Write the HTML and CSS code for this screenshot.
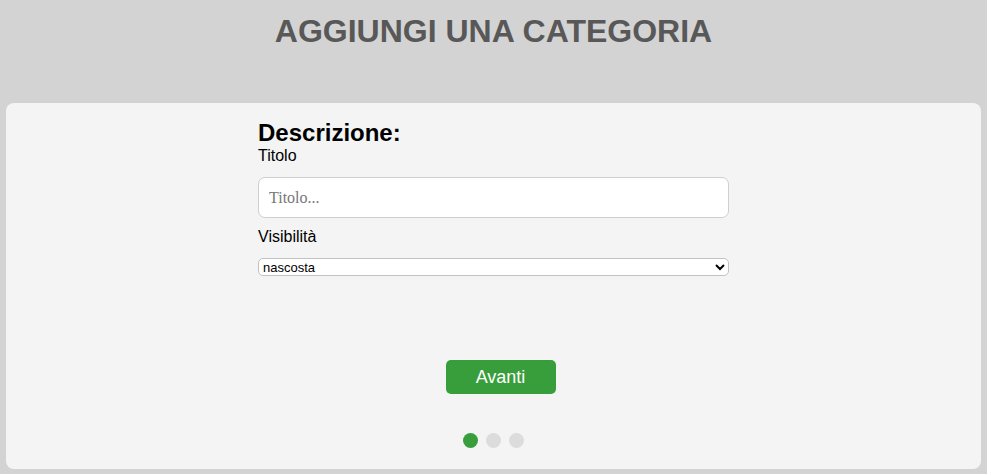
FILE: index.html
```html
<!DOCTYPE html>
<html lang="it">
<head>
<meta charset="utf-8">
<title>Aggiungi una categoria</title>
<link rel="stylesheet" href="styles.css">
</head>
<body>
<header class="page-header">
  <h1 class="page-title">AGGIUNGI UNA CATEGORIA</h1>
</header>
<main class="card">
  <form class="form">
    <h2 class="section-title">Descrizione:</h2>
    <label class="label" for="titolo">Titolo</label>
    <input class="text-input" id="titolo" type="text" placeholder="Titolo...">
    <label class="label label-vis" for="vis">Visibilità</label>
    <select class="select" id="vis">
      <option>nascosta</option>
      <option>visibile</option>
    </select>
    <div class="actions">
      <button class="btn" type="button">Avanti</button>
    </div>
    <div class="dots">
      <span class="dot dot-active"></span>
      <span class="dot"></span>
      <span class="dot"></span>
    </div>
  </form>
</main>
</body>
</html>
```

FILE: styles.css
```css
html, body {
  margin: 0;
  padding: 0;
}
body {
  background: #d3d3d3;
  font-family: "Liberation Sans", Arial, sans-serif;
  color: #000;
  height: 474px;
  overflow: hidden;
}
.page-header {
  height: 103px;
  box-sizing: border-box;
  padding-top: 13px;
}
.page-title {
  margin: 0;
  text-align: center;
  font-size: 32px;
  line-height: 37px;
  font-weight: bold;
  color: #585858;
}
.card {
  margin: 0 6px;
  height: 366px;
  box-sizing: border-box;
  background: #f4f4f4;
  border-radius: 8px;
  padding-top: 15px;
}
.form {
  width: 471px;
  margin: 0 auto;
  display: flex;
  flex-direction: column;
}
.section-title {
  margin: 0;
  font-size: 24px;
  font-weight: bold;
  line-height: 29px;
  height: 29px;
}
.label {
  font-size: 16px;
  line-height: 18px;
  margin: 0;
}
.text-input {
  margin-top: 12px;
  height: 41px;
  box-sizing: border-box;
  border: 1px solid #cfcfcf;
  border-radius: 7px;
  background: #fff;
  padding: 0 10px;
  font-family: "Liberation Serif", "Times New Roman", serif;
  font-size: 16px;
}
.text-input::placeholder {
  color: #777;
}
.label-vis {
  margin-top: 10px;
}
.select {
  margin-top: 12px;
  height: 18px;
  box-sizing: border-box;
  font-family: "Liberation Sans", Arial, sans-serif;
  font-size: 13px;
  border: 1px solid #c2c2c2;
  border-radius: 5px;
  background: #fff;
  padding: 0;
  color: #000;
}
.actions {
  display: flex;
  justify-content: center;
  margin-top: 84px;
  padding-left: 14px;
}
.btn {
  width: 110px;
  height: 34px;
  border: none;
  border-radius: 5px;
  background: #389e3c;
  color: #fff;
  font-family: "Liberation Sans", Arial, sans-serif;
  font-size: 18px;
  cursor: pointer;
}
.dots {
  display: flex;
  justify-content: center;
  gap: 8px;
  margin-top: 39px;
}
.dot {
  width: 15px;
  height: 15px;
  border-radius: 50%;
  background: #dcdcdc;
}
.dot-active {
  background: #389e3c;
}
```
